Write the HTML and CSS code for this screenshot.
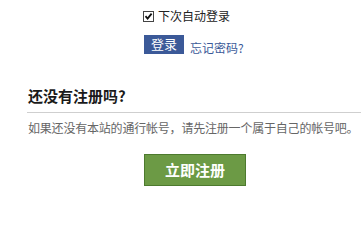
FILE: index.html
```html
<!DOCTYPE html>
<html lang="zh-CN">
<head>
<meta charset="utf-8">
<link rel="stylesheet" href="styles.css">
</head>
<body>
<div class="page">
  <div class="login">
    <label class="remember">
      <span class="check"><svg width="9" height="9" viewBox="0 0 9 9"><path d="M1.5 4.2 L3.6 6.6 L7.6 1.6" fill="none" stroke="#111" stroke-width="1.8"/></svg></span>
      <span>下次自动登录</span>
    </label>
    <div class="actions">
      <span class="btn-login">登录</span>
      <a class="forgot" href="#">忘记密码?</a>
    </div>
  </div>
  <div class="register">
    <h2 class="reg-title">还没有注册吗?</h2>
    <p class="reg-text">如果还没有本站的通行帐号，请先注册一个属于自己的帐号吧。</p>
    <div class="reg-action">
      <a class="btn-reg" href="#">立即注册</a>
    </div>
  </div>
</div>
</body>
</html>
```

FILE: styles.css
```css
html, body {
  margin: 0;
  padding: 0;
  background: #fff;
}
body {
  font-family: "Noto Sans CJK SC", "Liberation Sans", sans-serif;
  font-size: 12px;
  color: #333;
}
.page {
  width: 361px;
  height: 208px;
  overflow: hidden;
}
.login {
  padding: 8px 0 0 143px;
}
.remember {
  display: flex;
  align-items: center;
  gap: 4px;
  height: 16px;
  line-height: 16px;
  color: #222;
}
.check {
  width: 9px;
  height: 9px;
  border: 1px solid #444;
  background: #fff;
  display: flex;
  align-items: center;
  justify-content: center;
}
.check svg {
  display: block;
}
.actions {
  display: flex;
  align-items: flex-end;
  gap: 6px;
  margin-top: 11px;
  padding-left: 1px;
}
.btn-login {
  display: block;
  width: 40px;
  height: 19px;
  line-height: 18px;
  background: #3b5998;
  color: #fff;
  font-size: 13px;
  text-align: center;
}
.forgot {
  color: #3b5998;
  text-decoration: none;
  line-height: 14px;
  margin-bottom: -1px;
}
.register {
  padding: 0 0 0 27px;
  margin-top: 33px;
}
.reg-title {
  margin: 0;
  font-size: 15px;
  font-weight: bold;
  line-height: 18px;
  color: #1a1a1a;
  padding-bottom: 7px;
  border-bottom: 1px solid #cfcfcf;
  padding-left: 1px;
}
.reg-text {
  margin: 7px 0 0 1px;
  line-height: 16px;
  color: #666;
  letter-spacing: -0.2px;
  white-space: nowrap;
}
.reg-action {
  display: flex;
  padding-left: 117px;
  margin-top: 18px;
}
.btn-reg {
  display: block;
  width: 100px;
  height: 30px;
  line-height: 30px;
  background: #6c9a45;
  border: 1px solid #4d7a2e;
  color: #fff;
  font-size: 15px;
  font-weight: bold;
  text-align: center;
  text-decoration: none;
}
```
